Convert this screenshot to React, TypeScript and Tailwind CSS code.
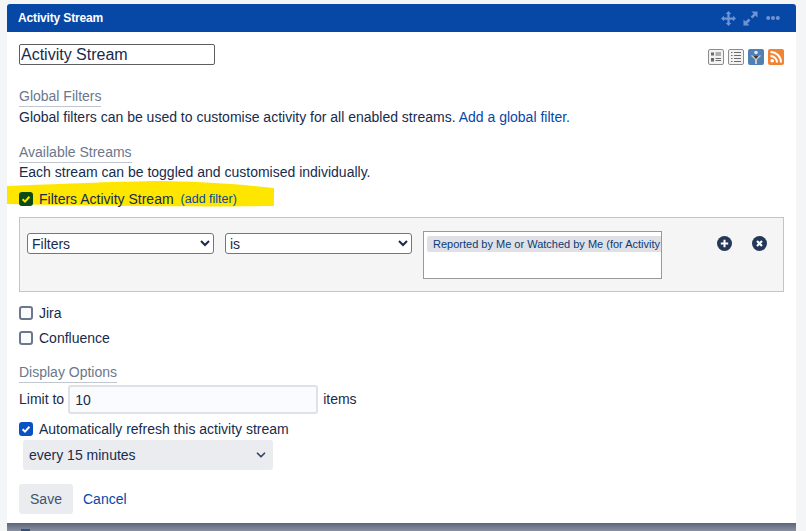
import React from "react";
import { ChevronDown } from "lucide-react";

function Heading({ children }: { children: React.ReactNode }) {
  return (
    <div className="w-fit border-b border-[#c1c7d0] text-[14px] leading-[17px] pb-[1px] text-[#6b778c]">
      {children}
    </div>
  );
}

function Check({ checked, dark }: { checked?: boolean; dark?: boolean }) {
  if (!checked) {
    return <span className="block w-[14px] h-[14px] rounded-[3px] border-2 border-[#6b778c] bg-[#fafbfc]" />;
  }
  return (
    <span className={`flex items-center justify-center w-[14px] h-[14px] rounded-[3px] ${dark ? "bg-[#0b4a13]" : "bg-[#0a52c4]"}`}>
      <svg viewBox="0 0 14 14" className="w-[14px] h-[14px]">
        <path d="M3.600 7.200l2.400 2.400 4.400-4.800" fill="none" stroke={dark ? "#ffe600" : "#fff"} strokeWidth="2" />
      </svg>
    </span>
  );
}

function HeaderIcons() {
  return (
    <div className="flex items-center gap-[7px] text-[#6f94cf]">
      <svg viewBox="0 0 16 16" className="w-[15px] h-[15px]" fill="currentColor">
        <path d="M8 0l3 3.200H9.200v3.600h3.600V5L16 8l-3.200 3V9.200H9.200v3.600H11L8 16l-3-3.200h1.800V9.200H3.200V11L0 8l3.200-3v1.800h3.600V3.200H5z" />
      </svg>
      <svg viewBox="0 0 16 16" className="w-[15px] h-[15px]" fill="currentColor">
        <path d="M9 0.500h6.500V7l-2.300-2.300-3.200 3.200L8.100 6l3.200-3.200zM7 15.500H0.500V9l2.300 2.300L6 8.100 7.900 10l-3.200 3.200z" />
      </svg>
      <svg viewBox="0 0 16 6" className="w-[14px] h-[6px] ml-[1px]" fill="currentColor">
        <circle cx="2.500" cy="3" r="2.300" />
        <circle cx="8" cy="3" r="2.300" />
        <circle cx="13.500" cy="3" r="2.300" />
      </svg>
    </div>
  );
}

function ViewIcons() {
  return (
    <div className="flex items-center gap-[4px]">
      <svg viewBox="0 0 16 16" className="w-[16px] h-[16px]">
        <rect x="0.500" y="0.500" width="15" height="15" rx="1.500" fill="#f2f2f2" stroke="#8c8c8c" />
        <path d="M3 3.500h3v3H3zM3 9h3v3.500H3z" fill="#6a6a6a" />
        <path d="M7.500 4h5.500M7.500 6h5.500M7.500 9.500h5.500M7.500 11.500h5.500" stroke="#6a6a6a" />
      </svg>
      <svg viewBox="0 0 16 16" className="w-[16px] h-[16px]">
        <rect x="0.500" y="0.500" width="15" height="15" rx="1.500" fill="#f2f2f2" stroke="#8c8c8c" />
        <path d="M3 3.500h1.500M3 6.500h1.500M3 9.500h1.500M3 12.500h1.500M6 3.500h7M6 6.500h7M6 9.500h7M6 12.500h7" stroke="#6a6a6a" />
      </svg>
      <svg viewBox="0 0 16 16" className="w-[16px] h-[16px]">
        <rect width="16" height="16" rx="2" fill="#4f81b5" />
        <circle cx="8" cy="3.500" r="1.800" fill="#dfe6ee" />
        <path d="M2.500 6.500h11L9 10.500V15H7v-4.500z" fill="#c9c9c9" />
        <path d="M5 6.500h6L8 10z" fill="#3a3a3a" />
      </svg>
      <svg viewBox="0 0 16 16" className="w-[16px] h-[16px]">
        <rect width="16" height="16" rx="2" fill="#ee8434" />
        <circle cx="4.200" cy="11.800" r="1.800" fill="#fff" />
        <path d="M2.500 7a6.500 6.500 0 0 1 6.500 6.500M2.500 3a10.500 10.500 0 0 1 10.500 10.500" fill="none" stroke="#fff" strokeWidth="2" />
      </svg>
    </div>
  );
}

function RoundButton({ cross }: { cross?: boolean }) {
  return (
    <svg viewBox="0 0 15 15" className="w-[15px] h-[15px]">
      <circle cx="7.500" cy="7.500" r="7.500" fill="#253858" />
      {cross ? (
        <path d="M5 5l5 5M10 5l-5 5" stroke="#fff" strokeWidth="2.200" />
      ) : (
        <path d="M7.500 3.800v7.400M3.800 7.500h7.400" stroke="#fff" strokeWidth="2" />
      )}
    </svg>
  );
}

export default function App() {
  return (
    <div className="h-[531px] w-[806px] overflow-hidden bg-[#f4f5f7] pl-[7px] pr-[10px] pt-[4px] font-['Liberation_Sans',Arial,sans-serif] text-[14px] text-[#172b4d]">
      <div className="h-[519px] rounded-t-[3px] bg-white">
        <div className="flex h-[28px] items-center justify-between rounded-t-[3px] bg-[#0747a6] pl-[11px] pr-[16px]">
          <span className="text-[12px] font-bold tracking-[-0.15px] text-white">Activity Stream</span>
          <HeaderIcons />
        </div>

        <div className="px-[12px]">
          <div className="flex items-start justify-between pt-[12px]">
            <input
              readOnly
              value="Activity Stream"
              className="h-[21px] w-[196px] rounded-[2px] border border-[#5e5e5e] bg-white px-[1px] text-[16px] text-[#172b4d] outline-none"
            />
            <div className="mt-[5px]">
              <ViewIcons />
            </div>
          </div>

          <div className="mt-[23px]">
            <Heading>Global Filters</Heading>
            <p className="mt-[1px] leading-[18px]">
              Global filters can be used to customise activity for all enabled streams.{" "}
              <a className="text-[#0747a6]">Add a global filter.</a>
            </p>
          </div>

          <div className="mt-[18px]">
            <Heading>Available Streams</Heading>
            <p className="leading-[18px]">Each stream can be toggled and customised individually.</p>
          </div>

          <div className="relative mt-[9px] flex h-[18px] items-center gap-[6px]">
            <svg viewBox="0 0 267 26" className="absolute left-[-12px] top-[-9px] h-[26px] w-[267px]">
              <path d="M0 5C50 3 100 1 145 0C190 0 230 3 267 7L267 25C190 26 90 25 0 23z" fill="#ffe600" />
            </svg>
            <span className="relative"><Check checked dark /></span>
            <span className="relative">Filters Activity Stream</span>
            <a className="relative ml-[1px] text-[12.500px] text-[#0747a6]">(add filter)</a>
          </div>

          <div className="mt-[9px] flex h-[75px] items-start border border-[#c4c4c4] bg-[#f5f5f5] pl-[7px] pt-[15px]">
            <select className="h-[21px] w-[187px] rounded-[3px] border border-[#767676] bg-white text-[14px] text-[#172b4d]">
              <option>Filters</option>
            </select>
            <select className="ml-[11px] h-[21px] w-[187px] rounded-[3px] border border-[#767676] bg-white text-[14px] text-[#172b4d]">
              <option>is</option>
            </select>
            <div className="ml-[11px] -mt-[2px] h-[48px] w-[239px] overflow-hidden border border-[#999] bg-white pl-[3px] pt-[4px]">
              <div className="whitespace-nowrap rounded-l-[2px] bg-[#dfe1e6] pl-[6px] text-[11px] leading-[16px] text-[#0c3a75]">
                Reported by Me or Watched by Me (for Activity
              </div>
            </div>
            <div className="ml-[55px] mt-[3px]"><RoundButton /></div>
            <div className="ml-[20px] mt-[3px]"><RoundButton cross /></div>
          </div>

          <div className="mt-[12px] flex h-[18px] items-center gap-[6px]">
            <Check />
            <span>Jira</span>
          </div>
          <div className="mt-[7px] flex h-[18px] items-center gap-[6px]">
            <Check />
            <span>Confluence</span>
          </div>

          <div className="mt-[17px]">
            <Heading>Display Options</Heading>
          </div>
          <div className="mt-[2px] flex items-center gap-[5px]">
            <span>Limit to</span>
            <input
              readOnly
              value="10"
              className="-ml-[1px] h-[29px] w-[250px] rounded-[3px] border-2 border-[#dfe1e6] bg-[#fafbfc] px-[5px] text-[14px] text-[#172b4d] outline-none"
            />
            <span>items</span>
          </div>

          <div className="mt-[6px] flex h-[18px] items-center gap-[6px]">
            <Check checked />
            <span>Automatically refresh this activity stream</span>
          </div>
          <div className="mt-[2px] ml-[4px] flex h-[30px] w-[250px] items-center justify-between rounded-[3px] bg-[#ebecf0] pl-[6px] pr-[5px]">
            <span>every 15 minutes</span>
            <ChevronDown size={14} strokeWidth={3} className="text-[#344563]" />
          </div>

          <div className="mt-[14px] flex items-center gap-[10px]">
            <button className="h-[30px] w-[54px] rounded-[3px] bg-[#ebecf0] text-[14px] text-[#42526e]">Save</button>
            <a className="text-[#0747a6]">Cancel</a>
          </div>
        </div>
      </div>
      <div className="h-[8px] bg-gradient-to-b from-[#5c6477] to-[#8a91a3] pl-[14px] pt-[6px]">
        <div className="h-[2px] w-[9px] bg-[#34507a]" />
      </div>
    </div>
  );
}
